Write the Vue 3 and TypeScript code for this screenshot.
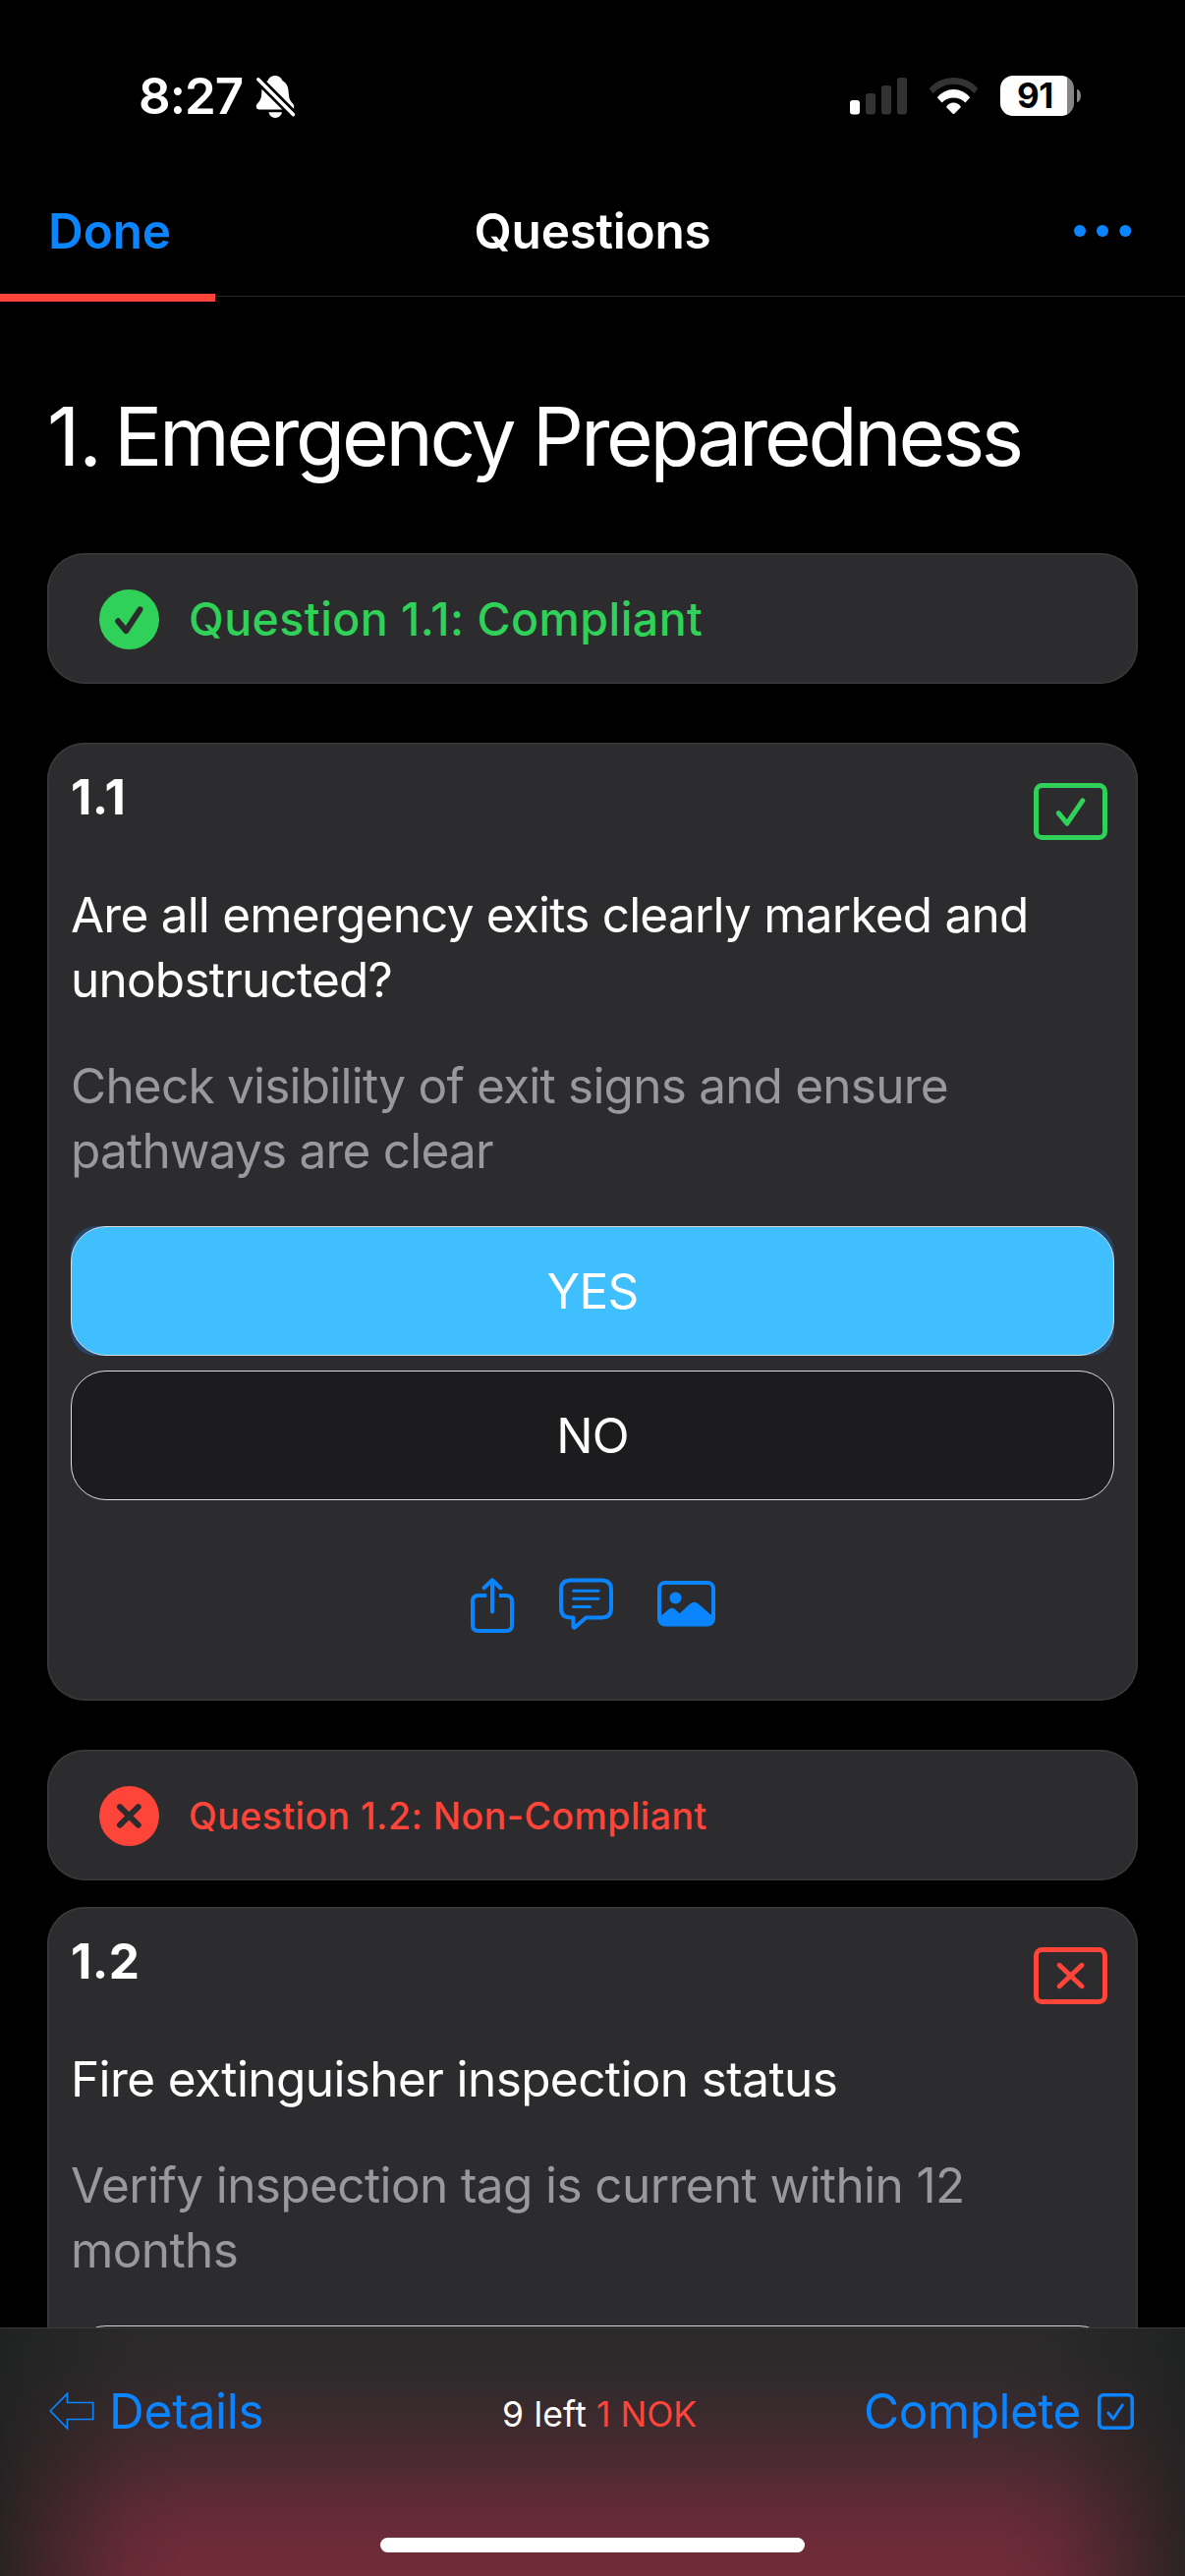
<script setup lang="ts">
interface Question {
  number: string
  ok: boolean
  title: string[]
  hint: string[]
  answers: string[]
}

const questions: Question[] = [
  {
    number: '1.1',
    ok: true,
    title: ['Are all emergency exits clearly marked and', 'unobstructed?'],
    hint: ['Check visibility of exit signs and ensure', 'pathways are clear'],
    answers: ['YES', 'NO'],
  },
  {
    number: '1.2',
    ok: false,
    title: ['Fire extinguisher inspection status'],
    hint: ['Verify inspection tag is current within 12', 'months'],
    answers: [''],
  },
]
</script>

<template>
  <div class="screen">
    <header class="top">
      <div class="status">
        <span class="time">8:27</span>
        <svg class="bell" width="42" height="44" viewBox="0 0 42 44">
          <path fill="#fff" d="M20 0c-3.600 0-6.500 2.300-7.300 5C8 7.500 6.500 11.500 6.300 17c-.2 6-1.300 8-4.300 11.500C.7 30 .8 31 .8 31.800.8 33.600 2 34.400 4 34.400h32c2 0 3.200-.8 3.200-2.600 0-.8.1-1.800-1.200-3.300-3-3.500-4.100-5.500-4.300-11.500C33.500 11.500 32 7.500 27.300 5 26.500 2.300 23.600 0 20 0z" />
          <path fill="#fff" d="M13.500 37.300h13.400c-.6 3.300-3.300 5.700-6.700 5.700s-6.100-2.400-6.700-5.700z" />
          <path stroke="#000" stroke-width="9" d="M-1 0L42 43" />
          <path stroke="#fff" stroke-width="3.600" stroke-linecap="round" d="M2.800 3.800L38.400 39.600" />
        </svg>
        <svg class="signal" width="58" height="38" viewBox="0 0 58 38">
          <rect x="0" y="23" width="10" height="14.500" rx="3" fill="#fff" />
          <rect x="16" y="16" width="10" height="21.500" rx="3" fill="#333" />
          <rect x="32" y="8" width="10" height="29.500" rx="3" fill="#333" />
          <rect x="48" y="0" width="10" height="37.500" rx="3" fill="#333" />
        </svg>
        <svg class="wifi" width="51" height="38" viewBox="0 0 51 38">
          <path fill="#333" d="M.6 11A33.500 33.500 0 0 1 50.400 11L46.500 16A28.600 28.600 0 0 0 4.500 16z" />
          <path fill="#fff" d="M8.800 20.300A21.100 21.100 0 0 1 42.200 20.300L37.400 25.500A16.700 16.700 0 0 0 13.600 25.500z" />
          <path fill="#fff" d="M18 30A8.400 8.400 0 0 1 33 30L26.300 36.700Q25.500 37.500 24.700 36.700z" />
        </svg>
        <div class="battery"><span>91</span></div>
        <i class="tip"></i>
      </div>
      <nav class="nav">
        <a class="done">Done</a>
        <h2>Questions</h2>
        <svg class="dots" width="60" height="14" viewBox="0 0 60 14" fill="#0a84ff">
          <circle cx="7" cy="7" r="6" /><circle cx="30" cy="7" r="6" /><circle cx="53.300" cy="7" r="6" />
        </svg>
      </nav>
      <div class="progress"><i></i></div>
    </header>

    <main class="content">
      <h1><span class="num">1.</span><span class="name">Emergency Preparedness</span></h1>

      <template v-for="q in questions" :key="q.number">
        <section class="card banner" :class="q.ok ? 'ok' : 'nok'">
          <svg width="61" height="61" viewBox="0 0 61 61">
            <circle cx="30.500" cy="30.500" r="30.500" fill="currentColor" />
            <path v-if="q.ok" class="mark" d="M19.200 32.300L27.300 42L41.500 20.300" />
            <path v-else class="mark" d="M21 21.200L39.700 39.700M39.700 21.200L21 39.700" />
          </svg>
          <span>Question {{ q.number }}: {{ q.ok ? 'Compliant' : 'Non-Compliant' }}</span>
        </section>

        <section class="card question" :class="q.ok ? 'ok' : 'nok'">
          <div class="head">
            <b>{{ q.number }}</b>
            <svg width="75" height="58" viewBox="0 0 75 58" fill="none" stroke="currentColor" stroke-width="5" stroke-linecap="round" stroke-linejoin="round">
              <rect x="2.500" y="2.500" width="70" height="53" rx="6" />
              <path v-if="q.ok" d="M25.300 30.700L34 41.200L49.800 17.800" />
              <path v-else d="M26.200 18.300L49 39.700M49 18.300L26.200 39.700" />
            </svg>
          </div>
          <p class="title"><span v-for="line in q.title" :key="line">{{ line }}</span></p>
          <p class="hint"><span v-for="line in q.hint" :key="line">{{ line }}</span></p>
          <div class="answers">
            <div v-for="(a, n) in q.answers" :key="a" class="plate" :class="{ lit: q.ok && n === 0 }">
              <button :class="{ chosen: q.ok && n === 0 }">{{ a }}</button>
            </div>
          </div>
          <div class="actions">
            <svg width="44" height="56" viewBox="0 0 44 56" fill="none" stroke="#0a84ff" stroke-width="4" stroke-linejoin="round">
              <path d="M16 18H8Q2 18 2 24V48Q2 54 8 54H36Q42 54 42 48V24Q42 18 36 18H29" />
              <path stroke-linecap="round" d="M22 34.500V2.500M13.700 10.300L22 2.300L30.300 10.300" />
            </svg>
            <svg width="55" height="53" viewBox="0 0 55 53" fill="none" stroke="#0a84ff" stroke-width="4" stroke-linejoin="round" stroke-linecap="round">
              <path d="M12 2.500H43Q53 2.500 53 12V31Q53 40.500 43 40.500H27.500L16 50.500Q14.500 51 14.500 49.500V40.500H12Q2 40.500 2 31V12Q2 2.500 12 2.500z" />
              <path stroke-width="3" d="M14.500 13.300H40M14.500 21.300H40M14.500 29.500H31.500" />
            </svg>
            <svg width="59" height="47" viewBox="0 0 59 47">
              <rect x="2" y="2" width="55" height="42.500" rx="6" fill="none" stroke="#0a84ff" stroke-width="4" />
              <circle cx="18.500" cy="17.500" r="6" fill="#0a84ff" />
              <path fill="#0a84ff" d="M3 36.500L12 28.800Q15 26.500 18 29L22.700 33.300L33.500 23.300Q37.500 20 41.500 23.300L56 36V40Q56 45 51 45H8Q3 45 3 40z" />
            </svg>
          </div>
        </section>
      </template>
    </main>

    <footer class="bar">
      <div class="row">
        <svg class="back" width="47" height="40" viewBox="0 0 47 40" fill="none" stroke="#0a84ff" stroke-width="1.700">
          <path d="M1.200 20L18.500 2.300V11.500H44.700V28.500H18.500V37.700z" />
        </svg>
        <a class="details">Details</a>
        <span class="left">9 left</span>
        <span class="bad">1 NOK</span>
        <a class="complete">Complete</a>
        <svg class="tick" width="37" height="37" viewBox="0 0 37 37" fill="none" stroke="#0a84ff" stroke-width="3.600" stroke-linecap="round" stroke-linejoin="round">
          <rect x="1.800" y="1.800" width="33.400" height="33.400" rx="4" />
          <path stroke-width="3" d="M11 20L16 26L25.300 12" />
        </svg>
      </div>
      <i class="home"></i>
    </footer>
  </div>
</template>

<style>
body { background: #000; }
</style>

<style scoped>
* { box-sizing: border-box; margin: 0; padding: 0; }
.screen {
  width: 1206px; height: 2622px; overflow: hidden; background: #000; color: #fff;
  display: flex; flex-direction: column;
  font-family: Inter, "Liberation Sans", sans-serif; font-size: 49.500px;
}
svg { display: block; flex: none; overflow: visible; }
span, a, b, h1, h2 { white-space: nowrap; }
i { display: block; }

.top { flex: none; height: 307px; display: flex; flex-direction: column; }
.status { height: 197px; display: flex; align-items: flex-start; padding: 77px 0 0 141px; }
.time { width: 119px; height: 40px; line-height: 42px; font-size: 51px; font-weight: 600; letter-spacing: -1px; }
.bell { overflow: hidden; }
.signal { margin: 2px 0 0 563px; }
.wifi { margin: 2px 0 0 22px; }
.battery {
  margin-left: 22px; width: 75px; height: 41px; border-radius: 13px; color: #000;
  background: linear-gradient(90deg, #fff 68px, #858585 68px);
  font-size: 35px; font-weight: 700; line-height: 41px; padding-left: 17px; letter-spacing: -0.500px;
}
.tip { width: 4px; height: 13px; margin: 14px 0 0 3px; background: #858585; border-radius: 0 4px 4px 0 / 0 7px 7px 0; }
.nav { height: 102px; display: grid; grid-template-columns: 1fr auto 1fr; padding: 8px 54px 0 49px; line-height: 60px; }
.done { color: #0a84ff; font-weight: 600; letter-spacing: -0.100px; }
.nav h2 { font-size: 49.500px; font-weight: 600; letter-spacing: -0.250px; padding-left: 5px; }
.dots { justify-self: end; margin-top: 23px; }
.progress { height: 8px; background: linear-gradient(#262626, #262626) 0 2px / 100% 1px no-repeat; }
.progress i { width: 219px; height: 8px; background: #ff453a; }

.content { flex: none; height: 2062px; overflow: hidden; padding: 0 48px; }
h1 { display: flex; height: 256px; padding-top: 88px; line-height: 100px; font-size: 82px; font-weight: 400; }
h1 .num { width: 68px; letter-spacing: -1px; }
h1 .name { letter-spacing: -3.350px; }
.card { background: #2c2c2e; border-radius: 38px; box-shadow: inset 0 0 0 1.500px #3a3a3c; }
.banner { height: 133px; display: flex; align-items: center; gap: 30px; padding: 1px 0 0 53px; font-size: 46.500px; font-weight: 500; letter-spacing: 0.450px; }
.banner.nok { font-size: 37.500px; }
.ok { color: #30d158; }
.nok { color: #ff453a; }
.mark { fill: none; stroke: #2c2c2e; stroke-width: 6px; stroke-linecap: round; stroke-linejoin: round; }
.question { height: 975px; margin: 60px 0 50px; padding: 25px 24px 0; }
.question.nok { margin-top: 27px; }
.head { display: flex; justify-content: space-between; height: 117px; padding: 0 7px 0 0; }
.head b { color: #fff; font-weight: 700; line-height: 60px; letter-spacing: 0.500px; }
.head svg { margin-top: 16px; }
p { line-height: 66px; color: #fff; letter-spacing: -0.780px; }
.nok p { letter-spacing: -0.600px; }
p span { display: block; }
.hint { color: #98989f; margin: 42px 0 44px; }
.answers { display: flex; flex-direction: column; gap: 15px; }
.plate { height: 132px; border-radius: 26px; }
.plate.lit { background: #24456a; }
button {
  display: block; width: 100%; height: 132px; border: 1px solid #dcdcde; border-radius: 36px;
  background: #1c1c1e; color: #fff; font: inherit; text-align: center; padding-bottom: 1px; letter-spacing: -0.700px;
}
button.chosen { background: #40bfff; }
.actions { display: flex; align-items: flex-start; padding: 79px 0 0 407px; }
.actions svg:nth-child(2) { margin-left: 46px; }
.actions svg:nth-child(3) { margin: 3px 0 0 45px; }

.bar {
  flex: none; height: 253px; border-top: 1px solid #3b3b3c;
  background:
    linear-gradient(90deg, rgba(30, 33, 32, .85), rgba(30, 33, 32, .55) 50px, rgba(30, 33, 32, .12) 130px, transparent 190px, transparent 1016px, rgba(30, 33, 32, .12) 1076px, rgba(30, 33, 32, .55) 1156px, rgba(30, 33, 32, .85)),
    linear-gradient(#2c2a2b 0, #2e2a2b 40px, #3b2a2e 90px, #4c2a31 135px, #602a36 180px, #6c2b38 215px, #722b39 253px);
}
.row { display: flex; align-items: flex-start; height: 213px; padding: 62px 0 0 50px; line-height: 60px; color: #0a84ff; }
.back { margin-top: 2px; }
.details { width: 400px; margin-left: 14px; margin-top: -8px; letter-spacing: -0.200px; }
.left { width: 96px; margin-top: -4px; color: #fff; font-size: 35.500px; letter-spacing: 0.200px; }
.bad { width: 272px; margin-top: -4px; color: #ff453a; font-size: 35.500px; }
.complete { width: 238px; margin-top: -8px; letter-spacing: -0.500px; }
.tick { margin-top: 4px; }
.home { width: 432px; height: 15px; border-radius: 8px; background: #fff; margin: 0 auto; }
</style>
